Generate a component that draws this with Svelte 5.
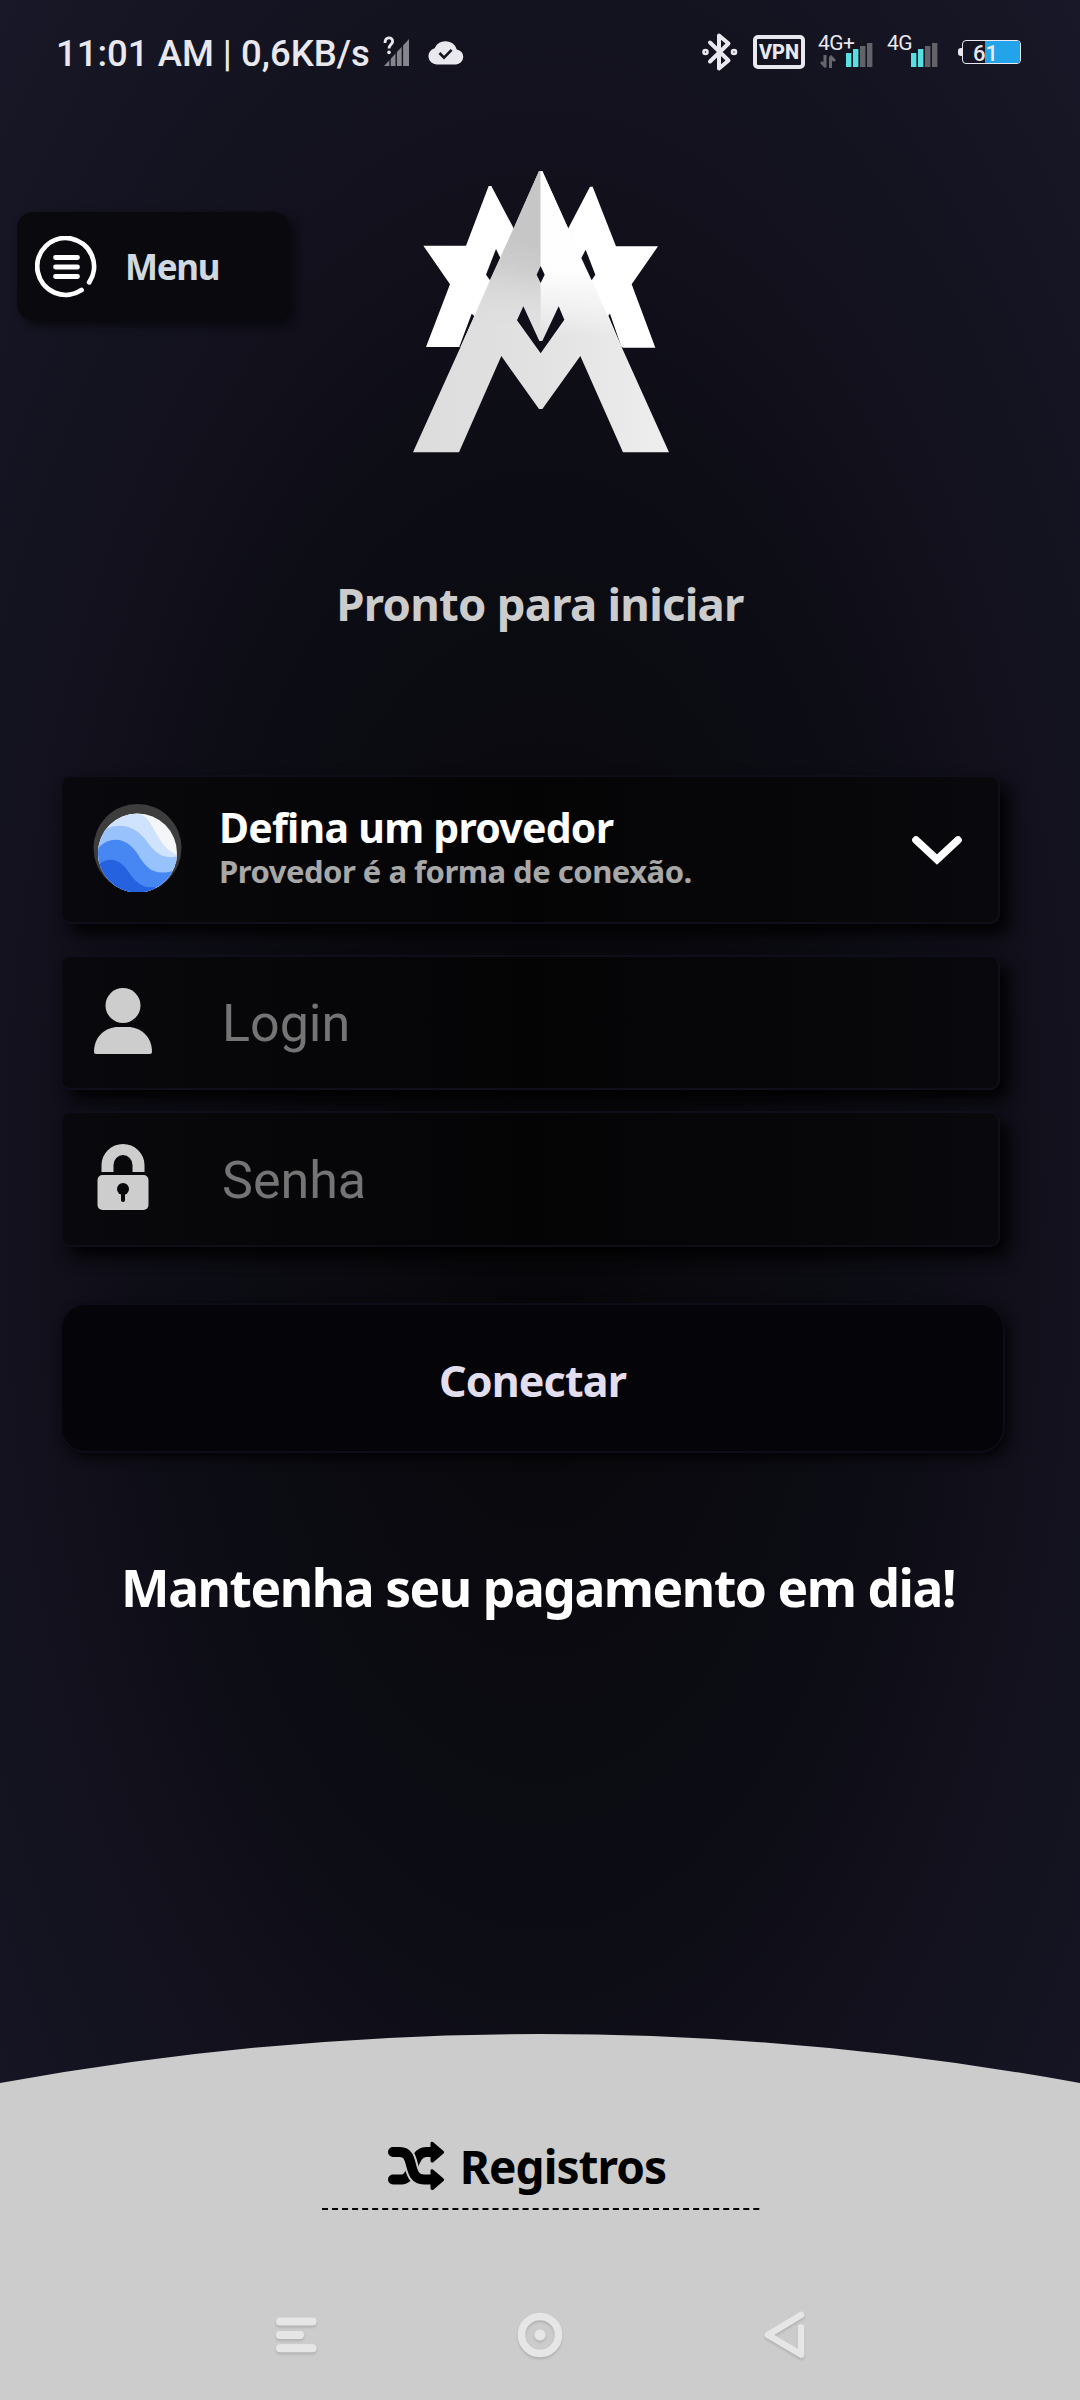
<script>
  let login = $state('');
  let senha = $state('');

  const carrier = '4G';
  const battery = 61;
  const bars = [14, 18, 21, 24];
</script>

{#snippet signal()}
  <svg class="bars" width="27" height="26" viewBox="0 0 27 26">
    {#each bars as h, i}
      <rect x={i * 7} y={25 - h} width="5.4" height={h} fill={i < 2 ? '#57dfe2' : '#626268'} />
    {/each}
  </svg>
{/snippet}

<div class="screen">
  <div class="status">
    <span class="clock">11:01 AM | 0,6KB/s</span>
    <svg class="nosim" width="28" height="32" viewBox="0 0 28 32">
      <path d="M1 31 26 4V31Z" fill="#85858d" />
      <path d="M7 22V31M13.2 16V31M19.4 10V31" stroke="#14131f" stroke-width="1.4" />
      <path d="M2 8C2 1.4 10 1.6 9.6 6.6C9.4 9.6 6 9.8 6 13.5" fill="none" stroke="#e8e8ee" stroke-width="2.8" />
      <circle cx="6" cy="17.4" r="1.8" fill="#e8e8ee" />
    </svg>
    <svg class="cloud" width="36" height="25" viewBox="0 0 36 25">
      <path d="M8.5 24.5A8.3 8.3 0 0 1 6.6 8.2A12 12 0 0 1 28.8 9.4A7.6 7.6 0 0 1 28 24.5Z" fill="#e8e8ee" />
      <path d="m11.5 13 4.5 4.6 7.6-7.8" fill="none" stroke="#14131f" stroke-width="2.6" />
    </svg>

    <div class="right">
      <svg width="38" height="40" viewBox="0 0 38 40" fill="none" stroke="#e8e8ee" stroke-width="4" stroke-linejoin="round" stroke-linecap="round">
        <path d="M9 10.5 27.5 28.5 18 36.5V3.5L27.5 11.5 9 29.5" />
        <circle cx="4.5" cy="20" r="1.3" />
        <circle cx="33" cy="20" r="1.3" />
      </svg>
      <span class="vpn">VPN</span>
      <span class="net">
        <span class="gen">{carrier}+</span>
        <svg class="updown" width="16" height="13" viewBox="0 0 16 13" fill="none" stroke="#65656c" stroke-width="3">
          <path d="M5 0V11M1 7 5 11 6 10M10.5 13V2M10 3 11 2 15 6" />
        </svg>
        {@render signal()}
      </span>
      <span class="net second">
        <span class="gen">{carrier}</span>
        {@render signal()}
      </span>
      <span class="battery">
        <span class="fill" style="width: {battery}%"></span>
        <span class="level">{battery}</span>
      </span>
    </div>
  </div>

  <header>
    <button class="menu">
      <svg width="62" height="62" viewBox="0 0 62 62" fill="none" stroke="#fff" stroke-linecap="round">
        <path d="M54.2 46.3A28.4 28.4 0 1 0 46.5 54" stroke-width="4.8" />
        <path d="M20.5 21.5H42.5M20.5 31H42.5M20.5 40.5H42.5" stroke-width="4.8" />
      </svg>
      <span>Menu</span>
    </button>

    <svg class="logo" width="300" height="320" viewBox="0 0 900 960">
      <defs>
        <linearGradient id="front" x1="0" y1="0" x2="1" y2="0">
          <stop offset="0" stop-color="#dcdcdc" />
          <stop offset="0.5" stop-color="#e2e2e2" />
          <stop offset="1" stop-color="#eeeeee" />
        </linearGradient>
        <linearGradient id="shade" gradientUnits="userSpaceOnUse" x1="300" y1="600" x2="440" y2="300">
          <stop offset="0.1" stop-color="#c4c4c4" stop-opacity="0" />
          <stop offset="1" stop-color="#c4c4c4" stop-opacity="0.9" />
        </linearGradient>
        <linearGradient id="facet" gradientUnits="userSpaceOnUse" x1="0" y1="63" x2="0" y2="560">
          <stop offset="0" stop-color="#fff" />
          <stop offset="0.6" stop-color="#fff" stop-opacity="0.95" />
          <stop offset="0.85" stop-color="#fff" stop-opacity="0.4" />
          <stop offset="1" stop-color="#fff" stop-opacity="0" />
        </linearGradient>
        <linearGradient id="fade" gradientUnits="userSpaceOnUse" x1="0" y1="360" x2="0" y2="530">
          <stop offset="0" stop-color="#fff" />
          <stop offset="1" stop-color="#000" />
        </linearGradient>
        <mask id="upper"><rect width="452" height="960" fill="url(#fade)" /></mask>
      </defs>
      <path d="M296 108H304L371 235 450 400 210 591H108L180 403 100 287H228Z" fill="#fff" />
      <path d="M600 110H608L678 289H804L725 403 796 593H699L450 400 535 235Z" fill="#fff" />
      <path d="M318 297 331 324 300 391 288 374Z" fill="#0f0e19" />
      <path d="M245 491 253 498 212 590H208Z M660 491 655 497 694 590Z" fill="#0f0e19" />
      <path d="M447 63H457L837 907H699L571 618 457 777H447L334 618 207 907H69L212 590 371 235Z" fill="url(#front)" />
      <path d="M447 63H452V600H202L371 235Z" fill="url(#shade)" mask="url(#upper)" />
      <path d="M452 63H457L681 560H452Z" fill="url(#facet)" />
      <path d="M587 299 616 374 605 391 574 324Z" fill="#0f0e19" />
      <path d="M452 348 464 374 452 399 440 374Z" fill="#0f0e19" />
      <path d="M400 469 448 573H457L506 469 523 509 452 610 381 511Z" fill="#0f0e19" />
    </svg>
  </header>

  <h1>Pronto para iniciar</h1>

  <main>
    <div class="card provider">
      <svg class="globe" width="90" height="90" viewBox="0 0 90 90">
        <defs>
          <clipPath id="ball"><circle cx="44.5" cy="50" r="39.5" /></clipPath>
          <clipPath id="frame"><rect width="90" height="89" /></clipPath>
        </defs>
        <g clip-path="url(#frame)">
          <circle cx="44.5" cy="45" r="44" fill="#3d3d3d" />
          <g clip-path="url(#ball)">
            <rect width="90" height="92" fill="#f4f6f8" />
            <path d="M0 10H44C64 14 60 46 90 54V92H0Z" fill="#cfe3ff" />
            <path d="M0 38C14 18 38 18 52 36C63 51 70 58 90 52V92H0Z" fill="#98c2fb" />
            <path d="M0 52C12 32 32 32 44 50C56 70 64 74 90 65V92H0Z" fill="#4687f4" />
            <path d="M0 66C14 52 26 55 35 68C42 79 50 86 62 84V92H0Z" fill="#2462df" />
          </g>
        </g>
      </svg>
      <div class="text">
        <strong>Defina um provedor</strong>
        <small>Provedor é a forma de conexão.</small>
      </div>
      <svg class="chevron" width="52" height="32" viewBox="0 0 52 32">
        <path d="M5 6 26 25.5 47 6" fill="none" stroke="#fff" stroke-width="7.6" stroke-linecap="round" />
      </svg>
    </div>

    <label class="card field">
      <svg width="58" height="66" viewBox="0 0 58 66" fill="#cdcdcd">
        <circle cx="29" cy="17.5" r="17.5" />
        <path d="M0 64C0 48 12 39 24 39H34C46 39 58 48 58 64Q58 66 56 66H2Q0 66 0 64Z" />
      </svg>
      <input type="text" placeholder="Login" bind:value={login} />
    </label>

    <label class="card field pass">
      <svg width="58" height="66" viewBox="0 0 58 66" fill="#cdcdcd">
        <path d="M7.5 28V21A21.5 21 0 0 1 50.5 21V28H38.5V21A9.5 10 0 0 0 19.5 21V28Z" />
        <rect x="3.5" y="31" width="51" height="35" rx="5" />
        <circle cx="29" cy="45" r="6" fill="#08080b" />
        <path d="M29 46V56" stroke="#08080b" stroke-width="4" stroke-linecap="round" />
      </svg>
      <input type="text" placeholder="Senha" bind:value={senha} />
    </label>

    <button class="connect">Conectar</button>
  </main>

  <p class="notice">Mantenha seu pagamento em dia!</p>

  <footer>
    <svg class="arc" width="1080" height="50" viewBox="0 0 1080 50">
      <path d="M0 49Q540-49 1080 49V50H0Z" fill="#ccc" />
    </svg>
    <div class="sheet">
      <div class="logs">
        <svg width="57" height="50" viewBox="0 0 57 50">
          <path d="M5 38.5H14C26 38.5 24 11 38 11H44" fill="none" stroke="#000" stroke-width="10" stroke-linecap="round" />
          <path d="M5 11H12C28 11 18 38.5 36 38.5H44" fill="none" stroke="#ccc" stroke-width="14" />
          <path d="M5 11H12C28 11 18 38.5 36 38.5H44" fill="none" stroke="#000" stroke-width="10" stroke-linecap="round" />
          <path d="M42.5 2Q43 0 45 1L55.5 10Q57 11 55.5 12.5L45 21.5Q43 22 42.5 20ZM42.5 29.5Q43 27.5 45 28.5L55.5 37.5Q57 38.5 55.5 40L45 49Q43 49.5 42.5 47.5Z" />
        </svg>
        <span>Registros</span>
      </div>
      <svg class="dashes" width="438" height="2" viewBox="0 0 438 2">
        <path d="M0 1H438" stroke="#000" stroke-width="2" stroke-dasharray="6 4.03" />
      </svg>
      <nav>
        <svg width="44" height="48" viewBox="0 0 44 48" fill="none" stroke="#e6e6e6" stroke-width="8" stroke-linecap="round">
          <path d="M6 10.5H38.5M6 24H26M6 37.3H38.5" />
        </svg>
        <svg width="48" height="48" viewBox="0 0 48 48">
          <circle cx="24" cy="24" r="18.5" fill="none" stroke="#e6e6e6" stroke-width="7.5" />
          <circle cx="24" cy="24" r="5.5" fill="#e6e6e6" />
        </svg>
        <svg width="44" height="48" viewBox="0 0 44 48" fill="none" stroke="#e6e6e6" stroke-width="6.5" stroke-linecap="round" stroke-linejoin="round">
          <path d="M38 4 5 24 38 43.5V16.5" />
        </svg>
      </nav>
    </div>
  </footer>
</div>

<style>
  :global(body) {
    margin: 0;
    background: #12111d;
  }

  .screen {
    display: flex;
    flex-direction: column;
    width: 1080px;
    height: 2400px;
    overflow: hidden;
    font-family: 'Noto Sans', sans-serif;
    font-weight: 700;
    background: radial-gradient(ellipse 860px 1750px at 540px 1200px, #07070a 0%, #0b0b12 33%, #12111d 62%, #1a192a 100%);
  }

  button {
    border: 0;
    padding: 0;
    font: inherit;
    background: none;
  }

  .status {
    display: flex;
    align-items: center;
    height: 106px;
    padding-left: 56px;
    box-sizing: border-box;
    font-family: Roboto, sans-serif;
    color: #e8e8ee;
  }

  .clock {
    width: 327px;
    font-size: 36.5px;
    font-weight: 500;
    white-space: nowrap;
  }

  .nosim {
    margin-top: -4px;
  }

  .cloud {
    margin: -2px 0 0 17px;
  }

  .right {
    display: flex;
    align-items: center;
    margin-left: auto;
    padding-right: 59px;
  }

  .right > svg {
    margin-top: -2px;
  }

  .vpn {
    box-sizing: border-box;
    width: 52px;
    height: 34px;
    margin: -2px 0 0 14px;
    border: 4px solid #e8e8ee;
    border-radius: 5px;
    font-size: 20px;
    font-weight: 800;
    line-height: 27px;
    text-align: center;
  }

  .net {
    position: relative;
    display: flex;
    align-items: flex-end;
    justify-content: flex-end;
    width: 55px;
    height: 34px;
    margin: -4px 0 0 13px;
  }

  .net.second {
    width: 51px;
    margin-left: 14px;
  }

  .gen {
    position: absolute;
    left: 0;
    top: -2px;
    font-size: 21px;
    line-height: 22px;
    font-weight: 400;
    letter-spacing: -0.5px;
  }

  .updown {
    position: absolute;
    left: 2px;
    bottom: 0;
  }

  .battery {
    position: relative;
    box-sizing: border-box;
    width: 59px;
    height: 24px;
    margin: -2px 0 0 24px;
    border: 1px solid #e8e8ee;
    border-radius: 4px;
    display: flex;
    justify-content: flex-end;
  }

  .battery::before {
    content: '';
    position: absolute;
    left: -5px;
    top: 7px;
    width: 4px;
    height: 8px;
    border-radius: 3px 0 0 3px;
    background: #e8e8ee;
  }

  .fill {
    background: #23a4ea;
    border-radius: 0 3px 3px 0;
  }

  .level {
    position: absolute;
    left: 10px;
    top: 1px;
    font-size: 22px;
    line-height: 23px;
    font-weight: 500;
  }

  header {
    display: grid;
    grid-template-columns: 390px 300px;
    margin-top: 44px;
    height: 320px;
  }

  .menu {
    display: flex;
    align-items: center;
    gap: 28px;
    width: 272px;
    height: 108px;
    margin: 62px 0 0 17px;
    padding: 1px 0 0 18px;
    box-sizing: border-box;
    border-radius: 16px;
    background: #0a090e;
    box-shadow: 5px 5px 10px #08080d;
    color: #d0d8e0;
    font-size: 35px;
    letter-spacing: -1.3px;
  }

  h1 {
    margin: 103px 0 0;
    text-align: center;
    font-size: 45.5px;
    line-height: 60px;
    letter-spacing: -0.75px;
    color: #ccc;
  }

  main {
    display: flex;
    flex-direction: column;
    margin: 142px 75px 0 60px;
  }

  .card {
    display: flex;
    align-items: center;
    box-sizing: border-box;
    width: 940px;
    border: 2px solid #0f0e1b;
    border-radius: 10px;
    background: linear-gradient(90deg, #09090d, #040405 50%, #09090d);
    box-shadow: 9px 10px 16px rgba(0, 0, 0, 0.9);
  }

  .provider {
    height: 149px;
    padding: 0 35px 0 31px;
  }

  .globe {
    margin-top: -3px;
  }

  .text {
    display: flex;
    flex-direction: column;
    flex: 1;
    margin: -4px 0 0 36px;
    white-space: nowrap;
  }

  strong {
    font-size: 41px;
    line-height: 46px;
    font-weight: 700;
    letter-spacing: -0.75px;
    color: #fff;
  }

  small {
    font-size: 31px;
    line-height: 42px;
    letter-spacing: -0.5px;
    color: #a8a8a8;
  }

  .field {
    height: 135px;
    margin-top: 31px;
    padding-left: 32px;
  }

  .field svg {
    margin-top: -4px;
  }

  .field.pass {
    height: 136px;
    margin-top: 21px;
  }

  input {
    width: 600px;
    margin-left: 70px;
    padding: 2px 0 0;
    border: 0;
    outline: 0;
    background: none;
    font-family: Roboto, sans-serif;
    font-size: 52px;
    color: #fff;
  }

  input::placeholder {
    color: #747474;
    opacity: 1;
  }

  .connect {
    box-sizing: border-box;
    height: 150px;
    margin-top: 56px;
    padding-top: 5px;
    border: 2px solid #0d0c18;
    border-radius: 26px;
    background: #050409;
    box-shadow: 4px 5px 12px rgba(0, 0, 0, 0.8);
    color: #e2deee;
    font-size: 43px;
    letter-spacing: -0.85px;
  }

  .notice {
    margin: 98px 0 0;
    padding-right: 4px;
    text-align: center;
    font-size: 51.5px;
    line-height: 72px;
    letter-spacing: -1.45px;
    color: #fff;
    white-space: nowrap;
  }

  footer {
    margin-top: auto;
    height: 366px;
  }

  .arc {
    display: block;
  }

  .sheet {
    display: flex;
    flex-direction: column;
    align-items: center;
    height: 317px;
    margin-top: -1px;
    background: #ccc;
  }

  .logs {
    display: flex;
    align-items: center;
    gap: 15px;
    height: 66px;
    margin-top: 50px;
    padding-right: 26px;
    font-size: 46px;
    letter-spacing: -0.95px;
    color: #000;
  }

  .dashes {
    margin: 9px 0 0 2px;
  }

  nav {
    display: flex;
    justify-content: space-between;
    width: 533px;
    margin-top: 101px;
  }

  nav svg {
    filter: drop-shadow(0 2px 1px rgba(0, 0, 0, 0.13));
  }
</style>
